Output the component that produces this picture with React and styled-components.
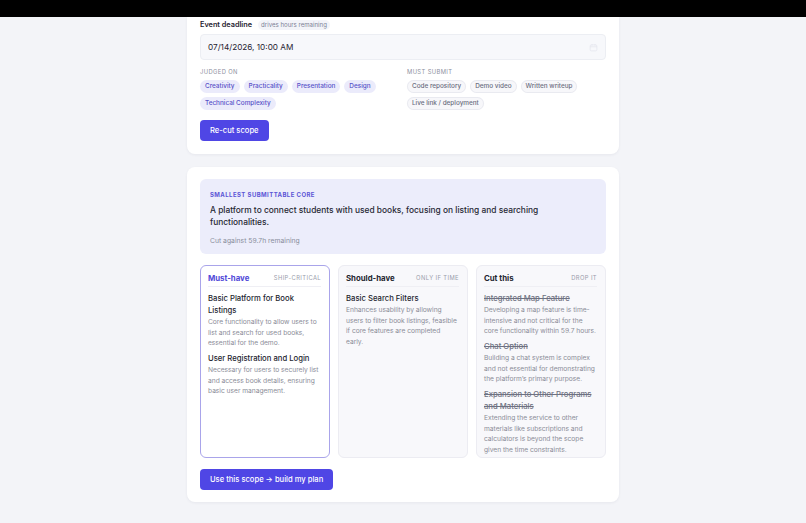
import styled, { createGlobalStyle } from 'styled-components';

const GlobalStyle = createGlobalStyle`
    html, body {
        margin: 0;
        padding: 0;
        background: #f3f4f8;
        font-family: Inter, "Noto Sans", "Liberation Sans", sans-serif;
        color: #1f2230;
        -webkit-font-smoothing: antialiased;
    }
`;

const Page = styled.div`
    min-height: 523px;
    background: #f3f4f8;
`;

const TopBar = styled.div`
    height: 17px;
    background: #000;
`;

const Stack = styled.div`
    width: 432px;
    margin: 0 auto;
    display: flex;
    flex-direction: column;
    gap: 13px;
`;

const Card = styled.section`
    background: #fff;
    border-radius: ${props => props.$cut ? '0 0 8px 8px' : '8px'};
    box-shadow: 0 1px 3px rgba(30, 35, 70, 0.06);
    padding: ${props => props.$cut ? '1px 13px 13px' : '12px 13px 12px'};
    display: flex;
    flex-direction: column;
`;

const LabelRow = styled.div`
    display: flex;
    align-items: center;
    gap: 6px;
    height: 13px;
`;

const FieldLabel = styled.span`
    font-size: 7.3px;
    font-weight: 600;
    color: #1f2230;
`;

const Hint = styled.span`
    font-size: 6.1px;
    color: #7b7f95;
    background: #f3f4f9;
    border-radius: 6px;
    padding: 1.5px 3px;
`;

const Input = styled.div`
    margin-top: 3px;
    height: 24px;
    display: flex;
    align-items: center;
    justify-content: space-between;
    padding: 0 7px;
    background: #f7f8fb;
    border: 1px solid #eceef3;
    border-radius: 4px;
    font-size: 8.2px;
    color: #1f2230;
`;

const Columns = styled.div`
    margin-top: 8px;
    display: grid;
    grid-template-columns: 1fr 1fr;
    gap: 8px;
`;

const SectionLabel = styled.div`
    font-size: 5.8px;
    letter-spacing: 0.07em;
    color: #8d90a0;
    text-transform: uppercase;
    margin-bottom: 5px;
`;

const Chips = styled.div`
    display: flex;
    flex-wrap: wrap;
    gap: 3.5px 4px;
`;

const Chip = styled.span`
    font-size: 6.4px;
    font-weight: 500;
    line-height: 13px;
    height: 13px;
    padding: 0 5px;
    border-radius: 7px;
    background: ${props => props.$outline ? '#f7f7fa' : '#ebebfb'};
    color: ${props => props.$outline ? '#6b6e80' : '#5650c8'};
    box-shadow: ${props => props.$outline ? 'inset 0 0 0 1px #e9eaf0' : 'none'};
`;

const Button = styled.button`
    align-self: flex-start;
    margin-top: ${props => props.$top || '10px'};
    height: 21px;
    padding: 0 10px;
    border: 0;
    border-radius: 4px;
    background: #4f46e5;
    color: #fff;
    font-family: inherit;
    font-size: 7.6px;
    font-weight: 500;
`;

const Core = styled.div`
    background: #ecedfb;
    border-radius: 6px;
    padding: 12px 10px 9px;
`;

const CoreLabel = styled.div`
    font-size: 6px;
    font-weight: 700;
    letter-spacing: 0.07em;
    color: #5b55d6;
    text-transform: uppercase;
`;

const CoreTitle = styled.p`
    margin: 6px 0 8px;
    font-size: 8.4px;
    line-height: 12px;
    font-weight: 500;
    color: #262833;
`;

const CoreMeta = styled.div`
    font-size: 6.8px;
    color: #8a8d9c;
`;

const Tiers = styled.div`
    margin-top: 11px;
    display: grid;
    grid-template-columns: repeat(3, 1fr);
    gap: 8px;
`;

const Tier = styled.div`
    min-height: 192px;
    box-sizing: border-box;
    border-radius: 6px;
    padding: 4px 8px 2px 7px;
    background: ${props => props.$active ? '#fff' : '#f8f8fb'};
    border: 1px solid ${props => props.$active ? '#a9a4ea' : '#ececf2'};
`;

const TierHead = styled.div`
    display: flex;
    align-items: center;
    justify-content: space-between;
    height: 16px;
    border-bottom: 1px solid #efeff4;
    margin-bottom: 6.5px;
`;

const TierName = styled.span`
    font-size: 7.8px;
    font-weight: 700;
    color: ${props => props.$active ? '#5048d8' : '#23252f'};
`;

const TierTag = styled.span`
    font-size: 5.8px;
    letter-spacing: 0.07em;
    color: #9a9dab;
    text-transform: uppercase;
`;

const Item = styled.div`
    margin-bottom: 4.5px;

    &:last-child {
        margin-bottom: 0;
    }
`;

const ItemTitle = styled.div`
    font-size: 7.7px;
    font-weight: 500;
    line-height: 12px;
    color: ${props => props.$cut ? '#6f7282' : '#23252f'};
    text-decoration: ${props => props.$cut ? 'line-through' : 'none'};
`;

const ItemText = styled.div`
    font-size: 6.7px;
    line-height: 10.5px;
    letter-spacing: -0.03px;
    color: #8b8d98;
`;

const CalendarIcon = () => (
    <svg width="9" height="9" viewBox="0 0 24 24" fill="none" stroke="#e4e6ee" strokeWidth="2">
        <rect x="3" y="5" width="18" height="16" rx="3" />
        <path d="M3 10h18M8 3v4M16 3v4" />
    </svg>
);

const judged = ['Creativity', 'Practicality', 'Presentation', 'Design', 'Technical Complexity'];
const submit = ['Code repository', 'Demo video', 'Written writeup', 'Live link / deployment'];

const tiers = [
    {
        name: 'Must-have',
        tag: 'Ship-critical',
        active: true,
        items: [
            ['Basic Platform for Book Listings', 'Core functionality to allow users to list and search for used books, essential for the demo.'],
            ['User Registration and Login', 'Necessary for users to securely list and access book details, ensuring basic user management.'],
        ],
    },
    {
        name: 'Should-have',
        tag: 'Only if time',
        items: [
            ['Basic Search Filters', 'Enhances usability by allowing users to filter book listings, feasible if core features are completed early.'],
        ],
    },
    {
        name: 'Cut this',
        tag: 'Drop it',
        cut: true,
        items: [
            ['Integrated Map Feature', 'Developing a map feature is time-intensive and not critical for the core functionality within 59.7 hours.'],
            ['Chat Option', 'Building a chat system is complex and not essential for demonstrating the platform\u2019s primary purpose.'],
            ['Expansion to Other Programs and Materials', 'Extending the service to other materials like subscriptions and calculators is beyond the scope given the time constraints.'],
        ],
    },
];

export default function App() {
    return (
        <Page>
            <GlobalStyle />
            <TopBar />
            <Stack>
                <Card $cut>
                    <LabelRow>
                        <FieldLabel>Event deadline</FieldLabel>
                        <Hint>drives hours remaining</Hint>
                    </LabelRow>
                    <Input>
                        <span>07/14/2026, 10:00 AM</span>
                        <CalendarIcon />
                    </Input>
                    <Columns>
                        <div>
                            <SectionLabel>Judged on</SectionLabel>
                            <Chips>
                                {judged.map(j => <Chip key={j}>{j}</Chip>)}
                            </Chips>
                        </div>
                        <div>
                            <SectionLabel>Must submit</SectionLabel>
                            <Chips>
                                {submit.map(s => <Chip key={s} $outline>{s}</Chip>)}
                            </Chips>
                        </div>
                    </Columns>
                    <Button>Re-cut scope</Button>
                </Card>

                <Card>
                    <Core>
                        <CoreLabel>Smallest submittable core</CoreLabel>
                        <CoreTitle>A platform to connect students with used books, focusing on listing and searching functionalities.</CoreTitle>
                        <CoreMeta>Cut against 59.7h remaining</CoreMeta>
                    </Core>
                    <Tiers>
                        {tiers.map(t => (
                            <Tier key={t.name} $active={t.active}>
                                <TierHead>
                                    <TierName $active={t.active}>{t.name}</TierName>
                                    <TierTag>{t.tag}</TierTag>
                                </TierHead>
                                {t.items.map(([title, text]) => (
                                    <Item key={title}>
                                        <ItemTitle $cut={t.cut}>{title}</ItemTitle>
                                        <ItemText>{text}</ItemText>
                                    </Item>
                                ))}
                            </Tier>
                        ))}
                    </Tiers>
                    <Button $top="11px">Use this scope → build my plan</Button>
                </Card>
            </Stack>
        </Page>
    );
}
